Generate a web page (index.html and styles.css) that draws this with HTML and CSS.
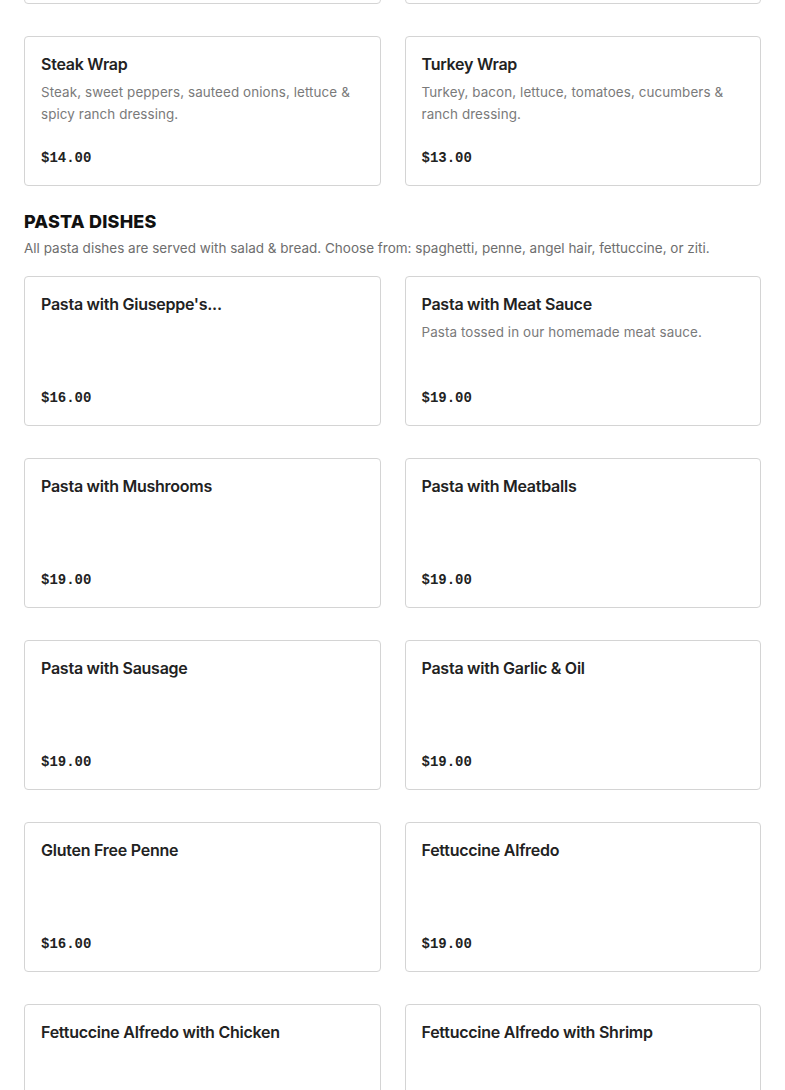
FILE: index.html
```html
<!DOCTYPE html>
<html>
<head>
<meta charset="utf-8">
<link rel="stylesheet" href="styles.css">
</head>
<body>
<main class="menu">
  <section class="section section-prev">
    <div class="grid">
      <div class="card card-empty"></div>
      <div class="card card-empty"></div>
      <div class="card"><h3 class="card-title">Steak Wrap</h3><p class="card-desc">Steak, sweet peppers, sauteed onions, lettuce &amp; spicy ranch dressing.</p><div class="price">$14.00</div></div>
      <div class="card"><h3 class="card-title">Turkey Wrap</h3><p class="card-desc">Turkey, bacon, lettuce, tomatoes, cucumbers &amp; ranch dressing.</p><div class="price">$13.00</div></div>
    </div>
  </section>
  <section class="section">
    <h2 class="section-title">Pasta Dishes</h2>
    <p class="section-desc">All pasta dishes are served with salad &amp; bread. Choose from: spaghetti, penne, angel hair, fettuccine, or ziti.</p>
    <div class="grid">
      <div class="card"><h3 class="card-title">Pasta with Giuseppe's...</h3><div class="price">$16.00</div></div>
      <div class="card"><h3 class="card-title">Pasta with Meat Sauce</h3><p class="card-desc">Pasta tossed in our homemade meat sauce.</p><div class="price">$19.00</div></div>
      <div class="card"><h3 class="card-title">Pasta with Mushrooms</h3><div class="price">$19.00</div></div>
      <div class="card"><h3 class="card-title">Pasta with Meatballs</h3><div class="price">$19.00</div></div>
      <div class="card"><h3 class="card-title">Pasta with Sausage</h3><div class="price">$19.00</div></div>
      <div class="card"><h3 class="card-title">Pasta with Garlic &amp; Oil</h3><div class="price">$19.00</div></div>
      <div class="card"><h3 class="card-title">Gluten Free Penne</h3><div class="price">$16.00</div></div>
      <div class="card"><h3 class="card-title">Fettuccine Alfredo</h3><div class="price">$19.00</div></div>
      <div class="card"><h3 class="card-title">Fettuccine Alfredo with Chicken</h3><div class="price">$23.00</div></div>
      <div class="card"><h3 class="card-title">Fettuccine Alfredo with Shrimp</h3><div class="price">$25.00</div></div>
    </div>
  </section>
</main>
</body>
</html>
```
FILE: styles.css
```css
html, body {
  margin: 0;
  padding: 0;
  background: #ffffff;
}
body {
  font-family: "Inter", "Noto Sans", "Liberation Sans", sans-serif;
  color: #222222;
  overflow: hidden;
}
.menu {
  padding: 0 24px;
}
.section-prev {
  margin-top: -146px;
  margin-bottom: 24px;
}
.grid {
  display: grid;
  grid-template-columns: 1fr 1fr;
  column-gap: 24px;
  row-gap: 32px;
}
.card {
  box-sizing: border-box;
  height: 150px;
  border: 1px solid #d4d4d4;
  border-radius: 4px;
  padding: 15px 16px 17px 16px;
  display: flex;
  flex-direction: column;
  background: #fff;
}
.card-title {
  margin: 0;
  font-size: 16px;
  font-weight: 600;
  line-height: 24px;
  color: #222;
  letter-spacing: -0.25px;
}
.card-desc {
  margin: 5px 0 0;
  font-size: 13.4px;
  line-height: 22px;
  color: #7a7a7a;
  font-weight: 400;
  letter-spacing: 0.1px;
}
.price {
  margin-top: auto;
  font-family: "Liberation Mono", monospace;
  font-weight: 700;
  font-size: 14px;
  line-height: 20px;
  color: #222;
}
.section-title {
  margin: 0;
  font-size: 18px;
  font-weight: 800;
  text-transform: uppercase;
  line-height: 24px;
  color: #111;
  letter-spacing: 0.2px;
}
.section-desc {
  margin: 4px 0 18px;
  font-size: 13.5px;
  line-height: 20px;
  color: #6e6e6e;
}
```
